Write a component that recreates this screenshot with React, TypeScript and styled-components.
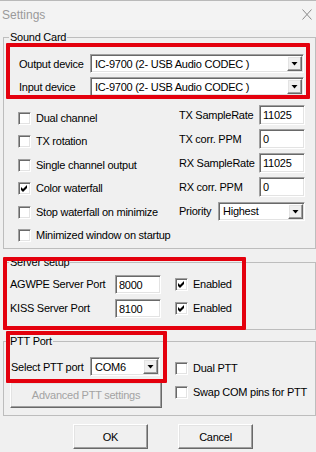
import React from 'react'
import styled, { createGlobalStyle, css } from 'styled-components'

const GlobalStyle = createGlobalStyle`
  html, body {
    margin: 0;
    padding: 0;
    background: #f0f0f0;
  }
  body {
    font-family: "Liberation Sans", Arial, sans-serif;
    font-size: 11px;
    letter-spacing: -0.25px;
    color: #000;
  }
`

const sunken = css`
  box-sizing: border-box;
  border: 1px solid;
  border-color: #a0a0a0 #ffffff #ffffff #a0a0a0;
  box-shadow: inset 1px 1px #696969, inset -1px -1px #e3e3e3;
  background: #fff;
`

const raised = css`
  box-sizing: border-box;
  border: 1px solid;
  border-color: #ffffff #696969 #696969 #ffffff;
  box-shadow: inset -1px -1px #a0a0a0, inset 1px 1px #e3e3e3;
  background: #f0f0f0;
`

const Window = styled.div`
  width: 316px;
  height: 452px;
  overflow: hidden;
  box-sizing: border-box;
  border-top: 1px solid #b9b9b9;
  background: #f0f0f0;
`

const TitleBar = styled.div`
  height: 29px;
  box-sizing: border-box;
  display: flex;
  justify-content: space-between;
  align-items: flex-start;
  padding: 7px 4px 0 2px;
  background: #f3f3f3;
`

const Title = styled.div`
  font-size: 12px;
  line-height: 14px;
  letter-spacing: 0;
  color: #9a9a9a;
`

const CloseIcon = styled.svg`
  margin-top: 1px;
`

const Body = styled.div`
  padding-left: 3px;
`

const GroupBox = styled.div<{ $height: number; $top: number }>`
  position: relative;
  box-sizing: border-box;
  width: 313px;
  height: ${p => p.$height}px;
  margin-top: ${p => p.$top}px;
  border: 1px solid #bdbdbd;
`

const Legend = styled.div`
  width: fit-content;
  margin: -7px 0 0 5px;
  padding: 0 1px;
  height: 13px;
  line-height: 13px;
  background: #f0f0f0;
`

const Mark = styled.div<{ $x: number; $y: number; $w: number; $h: number }>`
  position: absolute;
  left: ${p => p.$x}px;
  top: ${p => p.$y}px;
  width: ${p => p.$w}px;
  height: ${p => p.$h}px;
  box-sizing: border-box;
  border: 4px solid #e4000d;
  border-radius: 1px;
  pointer-events: none;
`

const DeviceRows = styled.div`
  display: flex;
  flex-direction: column;
  gap: 4px;
  padding: 10px 0 0 15px;
`

const DeviceRow = styled.div`
  display: flex;
  align-items: center;
  height: 19px;
`

const RowLabel = styled.span<{ $w: number }>`
  width: ${p => p.$w}px;
  flex: none;
  white-space: nowrap;
`

const Combo = styled.div<{ $w: number }>`
  ${sunken};
  display: flex;
  align-items: center;
  width: ${p => p.$w}px;
  height: 19px;
  padding-left: 4px;
  white-space: nowrap;
`

const DropButton = styled.div`
  ${raised};
  margin: 0 1px 0 auto;
  width: 15px;
  height: 15px;
  flex: none;
  display: flex;
  align-items: center;
  justify-content: center;
`

const Sections = styled.div`
  display: flex;
  margin-top: 9px;
`

const CheckColumn = styled.div`
  width: 175px;
  box-sizing: border-box;
  display: flex;
  flex-direction: column;
  gap: 10.4px;
  padding: 7px 0 0 14px;
`

const FieldColumn = styled.div`
  width: 126px;
  display: flex;
  flex-direction: column;
  gap: 4px;
`

const FieldRow = styled.div`
  display: flex;
  align-items: center;
  justify-content: space-between;
  height: 20px;
  white-space: nowrap;
`

const TextBox = styled.div<{ $w: number; $h?: number }>`
  ${sunken};
  width: ${p => p.$w}px;
  height: ${p => p.$h ?? 20}px;
  padding: 2px 0 0 3px;
  line-height: 14px;
`

const CheckItem = styled.label`
  display: flex;
  align-items: center;
  gap: 5px;
  height: 13px;
  line-height: 13px;
  white-space: nowrap;
`

const Box = styled.span`
  ${sunken};
  width: 13px;
  height: 13px;
  flex: none;
  display: block;
`

const ServerRows = styled.div`
  display: flex;
  flex-direction: column;
  gap: 4px;
  padding: 5px 0 0 6px;
`

const ServerRow = styled.div`
  display: grid;
  grid-template-columns: 105px 60px auto;
  align-items: center;
  height: 20px;
  white-space: nowrap;
`

const PttBody = styled.div`
  display: flex;
`

const PttLeft = styled.div`
  width: 171px;
  box-sizing: border-box;
  padding: 9px 0 0 7px;
`

const PttRight = styled.div`
  display: flex;
  flex-direction: column;
  gap: 11px;
  padding-top: 14px;
`

const PushButton = styled.div<{ $w: number; $h: number; $disabled?: boolean }>`
  ${raised};
  width: ${p => p.$w}px;
  height: ${p => p.$h}px;
  display: flex;
  align-items: center;
  justify-content: center;
  color: ${p => (p.$disabled ? '#a3a3a3' : '#000')};
`

const AdvancedButton = styled(PushButton)`
  margin: 6px 0 0 -1px;
`

const Footer = styled.div`
  display: flex;
  gap: 30px;
  padding-left: 70px;
  margin-top: 8px;
`

const Arrow = () => (
  <svg width="13" height="13" viewBox="0 0 13 13">
    <polygon points="3.5,5 9.5,5 6.5,8.5" fill="#000" />
  </svg>
)

const Tick = () => (
  <svg width="11" height="11" viewBox="0 0 11 11">
    <polygon points="2,4 4,6 8,2 8,5 4,9 2,7" fill="#000" />
  </svg>
)

const Check = ({ label, checked }: { label: string; checked?: boolean }) => (
  <CheckItem>
    <Box>{checked && <Tick />}</Box>
    <span>{label}</span>
  </CheckItem>
)

const Select = ({ value, width }: { value: string; width: number }) => (
  <Combo $w={width}>
    <span>{value}</span>
    <DropButton>
      <Arrow />
    </DropButton>
  </Combo>
)

export default function App() {
  return (
    <Window>
      <GlobalStyle />
      <TitleBar>
        <Title>Settings</Title>
        <CloseIcon width="10" height="11" viewBox="0 0 10 11">
          <path d="M0.5 0.5 L9.5 10.5 M9.5 0.5 L0.5 10.5" stroke="#8a8a8a" strokeWidth="1" fill="none" />
        </CloseIcon>
      </TitleBar>
      <Body>
        <GroupBox $height={212} $top={7}>
          <Legend>Sound Card</Legend>
          <DeviceRows>
            <DeviceRow>
              <RowLabel $w={71}>Output device</RowLabel>
              <Select value="IC-9700 (2- USB Audio CODEC )" width={214} />
            </DeviceRow>
            <DeviceRow>
              <RowLabel $w={71}>Input device</RowLabel>
              <Select value="IC-9700 (2- USB Audio CODEC )" width={214} />
            </DeviceRow>
          </DeviceRows>
          <Sections>
            <CheckColumn>
              <Check label="Dual channel" />
              <Check label="TX rotation" />
              <Check label="Single channel output" />
              <Check label="Color waterfall" checked />
              <Check label="Stop waterfall on minimize" />
              <Check label="Minimized window on startup" />
            </CheckColumn>
            <FieldColumn>
              <FieldRow>
                <span>TX SampleRate</span>
                <TextBox $w={46}>11025</TextBox>
              </FieldRow>
              <FieldRow>
                <span>TX corr. PPM</span>
                <TextBox $w={46}>0</TextBox>
              </FieldRow>
              <FieldRow>
                <span>RX SampleRate</span>
                <TextBox $w={46}>11025</TextBox>
              </FieldRow>
              <FieldRow>
                <span>RX corr. PPM</span>
                <TextBox $w={46}>0</TextBox>
              </FieldRow>
              <FieldRow>
                <span>Priority</span>
                <Select value="Highest" width={87} />
              </FieldRow>
            </FieldColumn>
          </Sections>
          <Mark $x={2} $y={5} $w={304} $h={56} />
        </GroupBox>

        <GroupBox $height={68} $top={13}>
          <Legend>Server setup</Legend>
          <ServerRows>
            <ServerRow>
              <span>AGWPE Server Port</span>
              <TextBox $w={46} $h={19}>8000</TextBox>
              <Check label="Enabled" checked />
            </ServerRow>
            <ServerRow>
              <span>KISS Server Port</span>
              <TextBox $w={46} $h={19}>8100</TextBox>
              <Check label="Enabled" checked />
            </ServerRow>
          </ServerRows>
          <Mark $x={-1} $y={-6} $w={243} $h={73} />
        </GroupBox>

        <GroupBox $height={75} $top={11}>
          <Legend>PTT Port</Legend>
          <PttBody>
            <PttLeft>
              <DeviceRow>
                <RowLabel $w={79}>Select PTT port</RowLabel>
                <Select value="COM6" width={70} />
              </DeviceRow>
              <AdvancedButton $w={152} $h={26} $disabled>
                Advanced PTT settings
              </AdvancedButton>
            </PttLeft>
            <PttRight>
              <Check label="Dual PTT" />
              <Check label="Swap COM pins for PTT" />
            </PttRight>
          </PttBody>
          <Mark $x={2} $y={-11} $w={161} $h={52} />
        </GroupBox>

        <Footer>
          <PushButton $w={75} $h={25}>OK</PushButton>
          <PushButton $w={75} $h={25}>Cancel</PushButton>
        </Footer>
      </Body>
    </Window>
  )
}
